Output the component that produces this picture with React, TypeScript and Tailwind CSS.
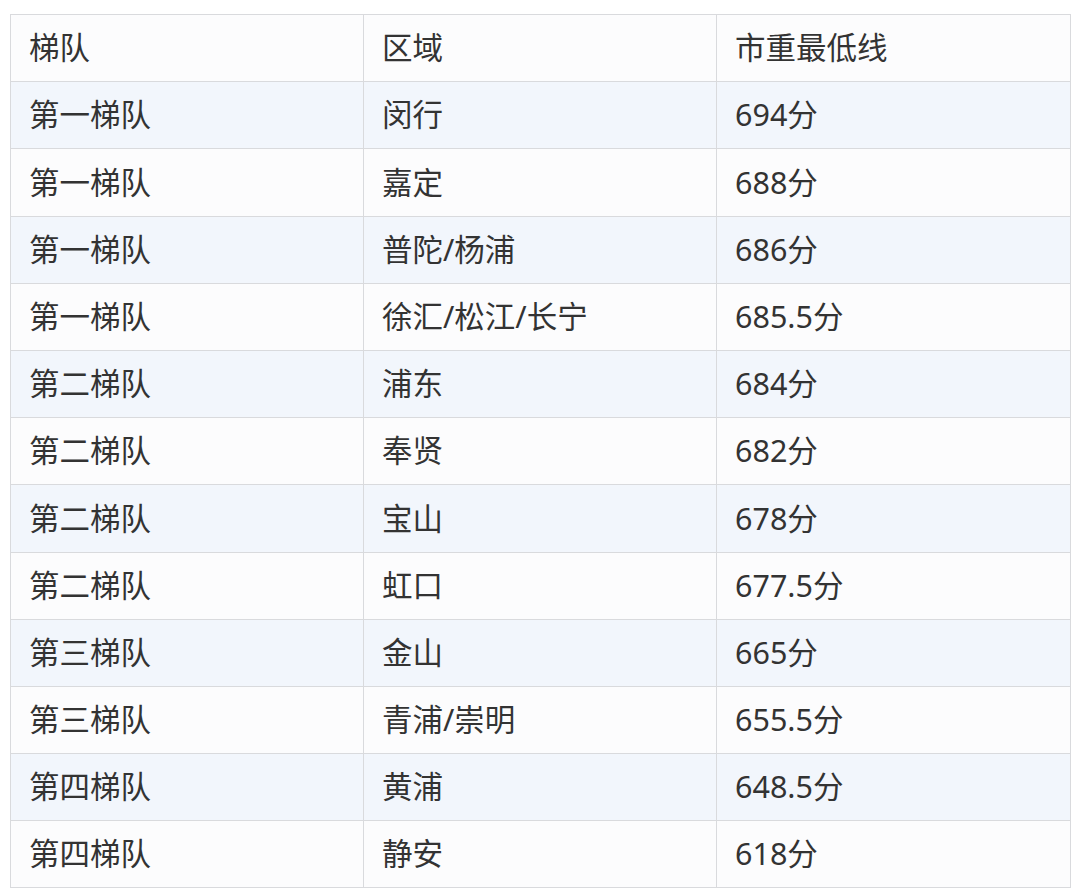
import React from 'react';

const rows: [string, string, string][] = [
  ['第一梯队', '闵行', '694分'],
  ['第一梯队', '嘉定', '688分'],
  ['第一梯队', '普陀/杨浦', '686分'],
  ['第一梯队', '徐汇/松江/长宁', '685.5分'],
  ['第二梯队', '浦东', '684分'],
  ['第二梯队', '奉贤', '682分'],
  ['第二梯队', '宝山', '678分'],
  ['第二梯队', '虹口', '677.5分'],
  ['第三梯队', '金山', '665分'],
  ['第三梯队', '青浦/崇明', '655.5分'],
  ['第四梯队', '黄浦', '648.5分'],
  ['第四梯队', '静安', '618分'],
];

const cell = 'border border-[#d9dadd] pl-[18px] h-[67.2px] align-middle text-left font-normal';

export default function App() {
  return (
    <div
      className="w-[1080px] h-[894px] bg-white pt-[14px] pl-[10px] text-[#333333] text-[30.5px]"
      style={{ fontFamily: '"Noto Sans", "Noto Sans CJK SC", sans-serif' }}
    >
      <table className="border-collapse w-[1060px] table-fixed">
        <colgroup>
          <col className="w-[353px]" />
          <col className="w-[353px]" />
          <col className="w-[354px]" />
        </colgroup>
        <thead>
          <tr className="bg-[#fcfcfd]">
            <th className={cell}>梯队</th>
            <th className={cell}>区域</th>
            <th className={cell}>市重最低线</th>
          </tr>
        </thead>
        <tbody>
          {rows.map((r, i) => (
            <tr key={i} className={i % 2 === 0 ? 'bg-[#f2f6fc]' : 'bg-[#fcfcfd]'}>
              <td className={cell}>{r[0]}</td>
              <td className={cell}>{r[1]}</td>
              <td className={cell}>{r[2]}</td>
            </tr>
          ))}
        </tbody>
      </table>
    </div>
  );
}
